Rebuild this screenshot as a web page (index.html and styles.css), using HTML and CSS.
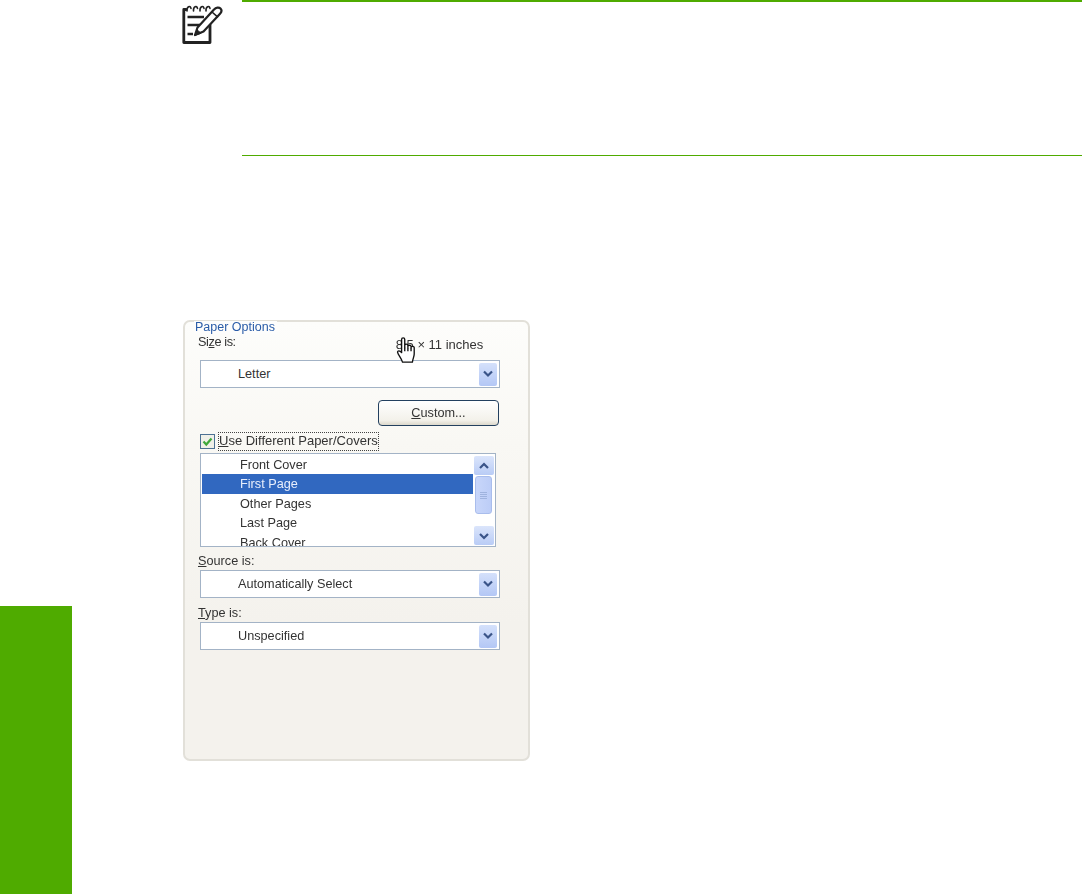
FILE: index.html
```html
<!DOCTYPE html>
<html lang="en">
<head>
<meta charset="utf-8">
<title>Paper Options</title>
<link rel="stylesheet" href="styles.css">
</head>
<body>
<div class="page">
  <aside class="side-tab"></aside>
  <main class="main">
    <section class="note">
      <svg class="note-icon" width="42" height="44" viewBox="0 0 42 44" fill="none" stroke="#222" stroke-linecap="round" stroke-linejoin="round">
        <path d="M5 6.500H2.800V39.500H29V22" stroke-width="2.800"/>
        <path d="M6 8c-.5-4.500 3.500-6 4-2.500M12.500 8c-.5-4.500 3.500-6 4-2.500M19 8c-.5-4.500 3.500-6 4-2.500M25 8c-.5-4.500 3.500-6 4-2.500" stroke-width="1.600"/>
        <path d="M6.500 14H23M6.500 22H19M6.500 31H12" stroke-width="2.500" stroke-linecap="butt"/>
        <path d="M14 32L16.500 24.500L33 6.500C35 4.200 38 4 39.500 5.500C41 7 40.500 9.200 38.800 11L22.500 28.500Z" fill="#fff" stroke-width="2.200"/>
        <path d="M14 32L16 26.800L19.800 30Z" fill="#222" stroke-width="1"/>
        <path d="M31 9L36.500 13.800" stroke-width="1.600"/>
      </svg>
      <div class="note-body"></div>
    </section>
    <section class="panel">
      <div class="legend">Paper Options</div>
      <div class="size-row">
        <span class="label size-label">Si<u>z</u>e is:</span>
        <span class="size-value">8.5 × 11 inches</span>
        <svg class="cursor" width="22" height="27" viewBox="0 0 24 30" fill="#fff" stroke="#111" stroke-width="1.500" stroke-linejoin="round">
          <path d="M7 29C6 25 2 21 1.500 18C1.500 16 4 16 6 18.500V4C6 1.500 9.500 1.500 9.500 4V13V10.500C9.500 8.500 13 8.500 13 10.500V13.500V11.500C13 9.800 16.500 9.800 16.500 11.500V14V12.800C16.500 11 20 11 20 12.800V20C20 23 18.500 25 18 29Z"/>
          <path d="M9.500 13V17M13 13.500V17M16.500 14V17" fill="none"/>
        </svg>
      </div>
      <div class="combo combo-first">
        <span class="combo-text">Letter</span>
        <span class="arrow-btn"><svg width="12" height="8" viewBox="0 0 12 8"><path class="chev" d="M2 1.500L6 5.500L10 1.500"/></svg></span>
      </div>
      <div class="button-row"><div class="button"><u>C</u>ustom...</div></div>
      <div class="check-row">
        <span class="checkbox"><svg width="11" height="11" viewBox="0 0 11 11"><path d="M1.500 5.500L4.300 8.500L9.500 2.500" fill="none" stroke="#3fa83a" stroke-width="2.200"/></svg></span>
        <span class="check-label"><u>U</u>se Different Paper/Covers</span>
      </div>
      <div class="listbox">
        <ul class="items">
          <li class="item">Front Cover</li>
          <li class="item selected">First Page</li>
          <li class="item">Other Pages</li>
          <li class="item">Last Page</li>
          <li class="item">Back Cover</li>
        </ul>
        <div class="scrollbar">
          <span class="scroll-btn"><svg width="12" height="8" viewBox="0 0 12 8"><path class="chev" d="M2 6L6 2L10 6"/></svg></span>
          <span class="thumb"><i></i><i></i><i></i><i></i></span>
          <span class="scroll-btn scroll-btn-down"><svg width="12" height="8" viewBox="0 0 12 8"><path class="chev" d="M2 2L6 6L10 2"/></svg></span>
        </div>
      </div>
      <div class="label field-label"><u>S</u>ource is:</div>
      <div class="combo">
        <span class="combo-text">Automatically Select</span>
        <span class="arrow-btn"><svg width="12" height="8" viewBox="0 0 12 8"><path class="chev" d="M2 1.500L6 5.500L10 1.500"/></svg></span>
      </div>
      <div class="label field-label field-label-type"><u>T</u>ype is:</div>
      <div class="combo">
        <span class="combo-text">Unspecified</span>
        <span class="arrow-btn"><svg width="12" height="8" viewBox="0 0 12 8"><path class="chev" d="M2 1.500L6 5.500L10 1.500"/></svg></span>
      </div>
    </section>
  </main>
</div>
</body>
</html>
```
FILE: styles.css
```css
* { box-sizing: border-box; }
html, body { margin: 0; padding: 0; background: #fff; }
body { font-family: "Liberation Sans", Arial, sans-serif; font-size: 12.7px; color: #333; overflow: hidden; }

.page { display: flex; width: 1082px; height: 894px; }
.side-tab { width: 72px; height: 288px; margin-top: 606px; background: #4fab00; flex: none; }
.main { flex: 1; padding-left: 111px; display: flex; flex-direction: column; }

.note { display: flex; height: 156px; }
.note-icon { flex: none; margin-top: 3px; margin-left: -2px; width: 42px; height: 44px; }
.note-body { flex: 1; margin-left: 19px; border-top: 2px solid #4fab00; border-bottom: 1px solid #4fab00; }

.panel {
  margin-top: 164px; width: 347px; height: 441px; padding: 0 0 0 14px;
  border: 2px solid #e2e0d9; border-radius: 7px;
  background: linear-gradient(#fdfdfb 0, #f9f8f4 120px, #f4f2ed 300px);
  display: flex; flex-direction: column; position: relative; filter: blur(.45px);
}
.legend { position: absolute; left: 9px; top: -1px; padding: 0 2px 0 1px; height: 13px; line-height: 12px; font-size: 12.5px; color: #2a5ca8; background: #fdfdfc; }
.label { line-height: 15px; }
.size-row { display: flex; align-items: center; height: 16px; margin-top: 12px; margin-left: -1px; position: relative; }
.size-label { letter-spacing: -.4px; }
.size-value { margin-left: 160px; padding-top: 4px; font-size: 13px; }
.cursor { position: absolute; left: 198px; top: 2px; }

.combo { width: 300px; height: 28px; flex: none; display: flex; align-items: center; background: #fff; border: 1px solid #a3b3c6; padding: 0 2px 0 37px; margin-left: 1px; }
.combo-first { margin-top: 10px; }
.combo-text { flex: 1; }
.arrow-btn { width: 18px; height: 23px; background: linear-gradient(#d5e1fb, #b3c7f5); border-radius: 2px; display: flex; align-items: center; justify-content: center; }
.chev { fill: none; stroke: #3a5488; stroke-width: 2.200; }

.button-row { display: flex; justify-content: flex-end; width: 300px; margin-left: 0; margin-top: 12px; }
.button { width: 121px; height: 26px; border: 1px solid #23405f; border-radius: 4px; background: linear-gradient(#fff, #f3f1ea 80%, #dcd8cc); text-align: center; line-height: 24px; }

.check-row { display: flex; align-items: center; margin-top: 6px; margin-left: 1px; height: 19px; }
.checkbox { width: 15px; height: 15px; border: 1px solid #4d7193; background: #f0f0e8; display: flex; align-items: center; justify-content: center; flex: none; }
.check-label { margin-left: 3px; width: 161px; height: 19px; line-height: 15px; padding-left: 0; font-size: 13px; border: 1px dotted #444; white-space: nowrap; }

.listbox { width: 296px; height: 94px; margin-top: 2px; margin-left: 1px; flex: none; background: #fff; border: 1px solid #a3b3c6; display: flex; overflow: hidden; padding: 1px 1px 0 1px; }
.items { list-style: none; margin: 0; padding: 0; width: 271px; flex: none; }
.item { height: 19.400px; line-height: 21px; padding-left: 38px; white-space: nowrap; }
.selected { background: #3168c0; color: #e8eefc; }
.scrollbar { flex: 1; margin: 1px 0 1px 0; display: flex; flex-direction: column; align-items: center; }
.scroll-btn { width: 20px; height: 19px; background: linear-gradient(#dbe5fb, #b9ccf6); border-radius: 2px; display: flex; align-items: center; justify-content: center; flex: none; }
.scroll-btn-down { margin-top: auto; }
.thumb { width: 17px; height: 38px; margin-top: 1px; background: linear-gradient(90deg, #c8d6fa, #bccdf7); border: 1px solid #a9bdec; border-radius: 3px; display: flex; flex-direction: column; align-items: center; justify-content: center; gap: 1px; }
.thumb i { display: block; width: 7px; height: 1px; background: #9fb3de; }

.field-label { margin-top: 7px; margin-left: -1px; height: 16px; }
.field-label-type { margin-top: 8px; height: 16px; }
.field-label + .combo { margin-top: 0; }
```
